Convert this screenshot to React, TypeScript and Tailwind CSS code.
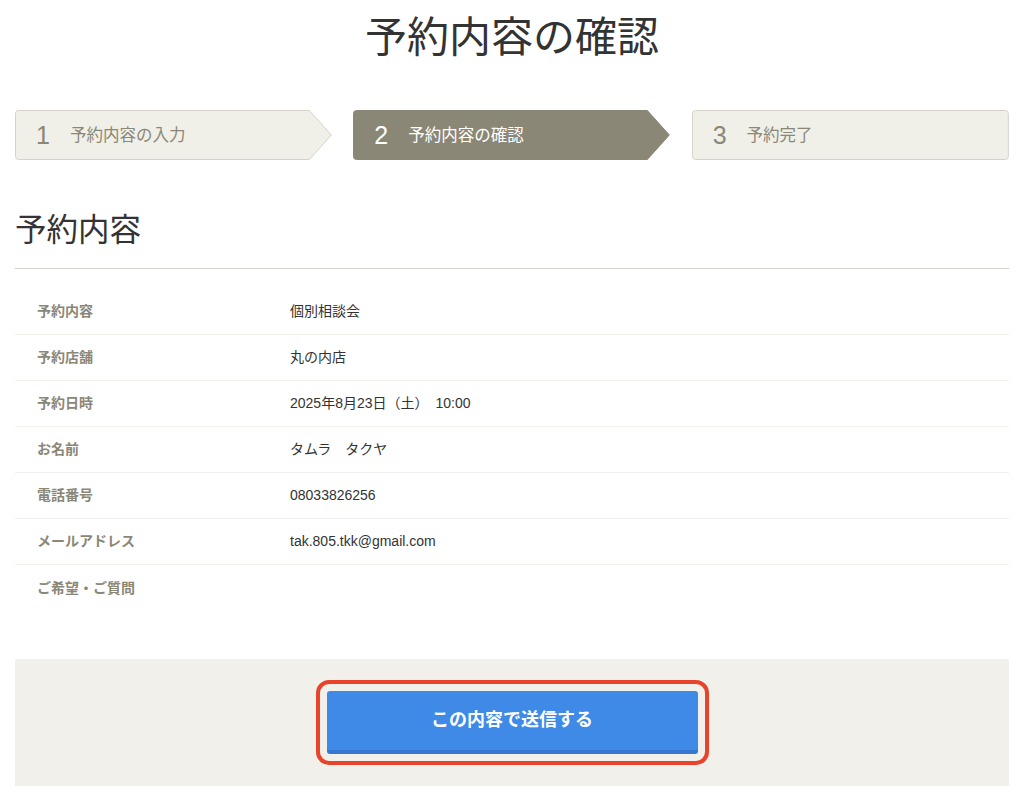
const jp = "font-['Liberation_Sans','Noto_Sans_CJK_JP',sans-serif]";

const steps = [
  { num: "1", label: "予約内容の入力", active: false, arrow: true },
  { num: "2", label: "予約内容の確認", active: true, arrow: true },
  { num: "3", label: "予約完了", active: false, arrow: false },
];

const rows = [
  { label: "予約内容", value: "個別相談会" },
  { label: "予約店舗", value: "丸の内店" },
  { label: "予約日時", value: "2025年8月23日（土）　10:00" },
  { label: "お名前", value: "タムラ　タクヤ" },
  { label: "電話番号", value: "08033826256" },
  { label: "メールアドレス", value: "tak.805.tkk@gmail.com" },
  { label: "ご希望・ご質問", value: "" },
];

function StepShape({ active, arrow }: { active: boolean; arrow: boolean }) {
  const fill = active ? "#8b8777" : "#f0efe8";
  const stroke = active ? "#8b8777" : "#d5d3c9";
  const d = arrow
    ? "M3.5 0.5 H295 L317 25 L295 49.5 H3.5 Q0.5 49.5 0.5 46.5 V3.5 Q0.5 0.5 3.5 0.5 Z"
    : "M3.5 0.5 H314 Q317 0.5 317 3.5 V46.5 Q317 49.5 314 49.5 H3.5 Q0.5 49.5 0.5 46.5 V3.5 Q0.5 0.5 3.5 0.5 Z";
  return (
    <svg
      className="absolute inset-0 h-full w-full"
      viewBox="0 0 318 50"
      preserveAspectRatio="none"
    >
      <path d={d} fill={fill} stroke={stroke} strokeWidth="1" vectorEffect="non-scaling-stroke" />
    </svg>
  );
}

export default function App() {
  return (
    <div className={`min-h-[802px] bg-white ${jp}`}>
      <div className="mx-[15px]">
        <h1 className="pt-[17px] text-center text-[42px] leading-[42px] font-normal text-[#333333]">
          予約内容の確認
        </h1>

        <div className="mt-[51px] flex gap-[21px]">
          {steps.map((step) => (
            <div key={step.num} className="relative h-[50px] flex-1">
              <StepShape active={step.active} arrow={step.arrow} />
              <div
                className={`relative flex h-full items-center pl-[21px] ${
                  step.active ? "text-white" : "text-[#8b8777]"
                }`}
              >
                <span className="text-[25px] font-light leading-none">{step.num}</span>
                <span className="ml-[20px] text-[16.5px]">{step.label}</span>
              </div>
            </div>
          ))}
        </div>

        <h2 className="mt-[55px] border-b border-[#d3d3d0] pb-[23px] text-[31.5px] leading-[30px] font-normal text-[#333333]">
          予約内容
        </h2>

        <div className="mt-[20px]">
          {rows.map((row, i) => (
            <div
              key={row.label}
              className={`flex h-[46px] items-center text-[14px] ${
                i < rows.length - 1 ? "border-b border-[#f1f0ea]" : ""
              }`}
            >
              <div className="w-[275px] pl-[22px] font-bold text-[#8b8777]">{row.label}</div>
              <div className="text-[#333333]">{row.value}</div>
            </div>
          ))}
        </div>

        <div className="mt-[48px] flex h-[127px] items-center justify-center bg-[#f1f0ea]">
          <div className="rounded-[13px] border-[4px] border-[#e8442b] p-[7px]">
            <button
              type="button"
              className="flex h-[63px] w-[371px] items-center justify-center rounded-[3px] border-b-[4px] border-[#3877cf] bg-[#3e8ae6] text-[18px] font-bold text-white"
            >
              この内容で送信する
            </button>
          </div>
        </div>
      </div>
    </div>
  );
}
